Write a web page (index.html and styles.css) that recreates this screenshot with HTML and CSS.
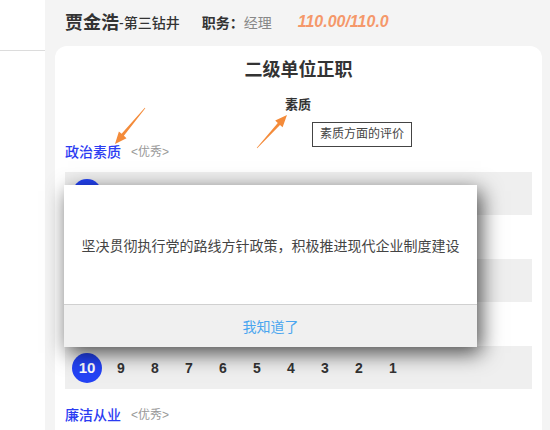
FILE: index.html
```html
<!DOCTYPE html>
<html lang="zh">
<head>
<meta charset="utf-8">
<link rel="stylesheet" href="styles.css">
</head>
<body>
<div class="side"><div class="side-line"></div></div>
<div class="main">
  <div class="header">
    <span class="name">贾金浩</span><span class="unit">-第三钻井</span>
    <span class="job-label">职务：</span><span class="job">经理</span>
    <span class="score">110.00/110.0</span>
  </div>
  <div class="card">
    <div class="title">二级单位正职</div>
    <div class="section-label"><span class="sec-name">政治素质</span><span class="grade">&lt;优秀&gt;</span></div>
    <div class="rate-row">
      <span class="num active">10</span><span class="num">9</span><span class="num">8</span><span class="num">7</span><span class="num">6</span><span class="num">5</span><span class="num">4</span><span class="num">3</span><span class="num">2</span><span class="num">1</span>
    </div>
    <div class="rate-row spaced">
      <span class="num active">10</span><span class="num">9</span><span class="num">8</span><span class="num">7</span><span class="num">6</span><span class="num">5</span><span class="num">4</span><span class="num">3</span><span class="num">2</span><span class="num">1</span>
    </div>
    <div class="rate-row spaced">
      <span class="num active">10</span><span class="num">9</span><span class="num">8</span><span class="num">7</span><span class="num">6</span><span class="num">5</span><span class="num">4</span><span class="num">3</span><span class="num">2</span><span class="num">1</span>
    </div>
    <div class="section-label next"><span class="sec-name">廉洁从业</span><span class="grade">&lt;优秀&gt;</span></div>
  </div>
</div>

<div class="anno-label">素质</div>
<div class="tooltip">素质方面的评价</div>
<svg class="arrows" width="550" height="430" viewBox="0 0 550 430">
  <polygon fill="#f48b3a" points="145.3,108.2 123.9,135.8 126.5,138.2 115,144 118.9,131.6 121.6,133.8 144.8,107.8"/>
  <polygon fill="#f48b3a" points="257.2,148.2 280,124.9 282.6,127.3 287,115 275.2,120.6 277.8,122.9 256.8,147.8"/>
</svg>

<div class="modal">
  <div class="modal-body">坚决贯彻执行党的路线方针政策，积极推进现代企业制度建设</div>
  <div class="modal-foot">我知道了</div>
</div>
</body>
</html>
```

FILE: styles.css
```css
html, body {
  margin: 0;
  padding: 0;
}
body {
  width: 550px;
  height: 430px;
  overflow: hidden;
  display: flex;
  font-family: "Liberation Sans", "Noto Sans CJK SC", sans-serif;
  color: #333;
  background: #f4f4f4;
  position: relative;
}
.side {
  width: 45px;
  flex: none;
  background: #fff;
}
.side-line {
  margin-top: 50px;
  border-top: 1px solid #dcdcdc;
}
.main {
  flex: 1;
  display: flex;
  flex-direction: column;
  padding: 0 8px 0 10px;
  background: #f4f4f4;
}
.header {
  height: 46px;
  display: flex;
  align-items: center;
  padding-left: 10px;
  padding-bottom: 4px;
  box-sizing: border-box;
  white-space: nowrap;
}
.name {
  font-size: 18px;
  font-weight: bold;
  color: #333;
}
.unit {
  font-size: 14px;
  font-weight: 500;
  color: #333;
  margin-top: 2px;
}
.job-label {
  font-size: 14px;
  font-weight: bold;
  margin-left: 22px;
  margin-top: 2px;
}
.job {
  font-size: 14px;
  color: #888;
  margin-top: 2px;
}
.score {
  font-size: 16px;
  font-style: italic;
  font-weight: bold;
  color: #f5986a;
  margin-left: 26px;
  margin-top: 2px;
}
.card {
  flex: 1;
  background: #fff;
  border-radius: 12px 12px 0 0;
  padding: 12px 10px 0;
}
.title {
  text-align: center;
  font-size: 18px;
  font-weight: bold;
  line-height: 24px;
  color: #333;
}
.section-label {
  margin-top: 60px;
  line-height: 20px;
  display: flex;
  align-items: center;
}
.section-label.next {
  margin-top: 16px;
}
.sec-name {
  font-size: 14px;
  font-weight: 500;
  color: #2b3cf2;
}
.grade {
  font-size: 12px;
  color: #999;
  margin-left: 10px;
}
.rate-row {
  margin-top: 10px;
  height: 43px;
  background: #efefef;
  display: flex;
  align-items: center;
  gap: 4px;
  padding-left: 7px;
}
.rate-row.spaced {
  margin-top: 44px;
}
.num {
  width: 30px;
  height: 30px;
  display: flex;
  align-items: center;
  justify-content: center;
  font-size: 14px;
  font-weight: bold;
  color: #333;
}
.num.active {
  border-radius: 50%;
  background: #2443f5;
  color: #fff;
  font-size: 15px;
}
.anno-label {
  position: absolute;
  left: 285px;
  top: 96px;
  font-size: 13px;
  font-weight: bold;
  line-height: 18px;
  color: #333;
}
.tooltip {
  position: absolute;
  left: 312px;
  top: 122px;
  border: 1px solid #444;
  padding: 3px 7px;
  font-size: 12px;
  line-height: 17px;
  color: #444;
  background: #fff;
  white-space: nowrap;
}
.arrows {
  position: absolute;
  left: 0;
  top: 0;
  pointer-events: none;
}
.modal {
  position: absolute;
  left: 64px;
  top: 185px;
  width: 413px;
  height: 162px;
  display: flex;
  flex-direction: column;
  background: #fff;
  box-shadow: 4px 6px 20px rgba(0, 0, 0, 0.7);
}
.modal-body {
  height: 119px;
  display: flex;
  align-items: center;
  justify-content: center;
  font-size: 14px;
  color: #444;
}
.modal-foot {
  flex: 1;
  background: #f0f0f0;
  border-top: 1px solid #d0d0d0;
  display: flex;
  align-items: center;
  justify-content: center;
  font-size: 14px;
  color: #4aa6ef;
}
```
